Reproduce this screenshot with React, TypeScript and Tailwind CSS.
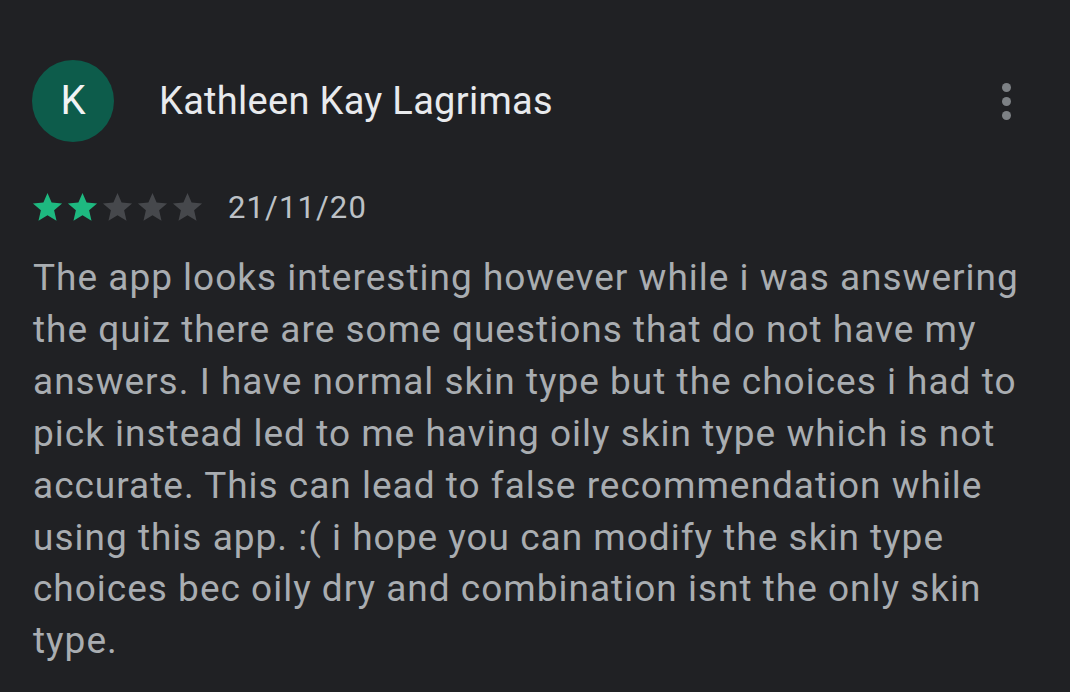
export default function App() {
  const rating = 2;
  return (
    <div className="w-[1070px] h-[692px] overflow-hidden bg-[#202124] font-['Roboto',sans-serif]">
      <div className="pl-[32px] pr-[40px] pt-[60px]">
        {/* Header */}
        <div className="flex items-center">
          <div className="w-[82px] h-[82px] rounded-full bg-[#0d5c4b] flex items-center justify-center text-[40px] leading-none text-[#f1f3f4]">
            K
          </div>
          <div className="ml-[45px] text-[38px] leading-none text-[#e8eaed] tracking-[0.3px]">Kathleen Kay Lagrimas</div>
          <div className="ml-auto flex flex-col gap-[5px] mr-[19px]">
            <span className="w-[9px] h-[9px] rounded-full bg-[#7d8185]" />
            <span className="w-[9px] h-[9px] rounded-full bg-[#7d8185]" />
            <span className="w-[9px] h-[9px] rounded-full bg-[#7d8185]" />
          </div>
        </div>

        {/* Rating */}
        <div className="flex items-center mt-[48px]">
          <div className="flex -ml-[2px]">
            {[0, 1, 2, 3, 4].map((i) => (
              <svg key={i} viewBox="0 0 24 24" className="w-[35px] h-[35px]">
                <path
                  d="M12 17.27L18.18 21l-1.64-7.03L22 9.24l-7.19-.61L12 2 9.19 8.63 2 9.24l5.46 4.73L5.82 21z"
                  fill={i < rating ? "#1eb980" : "#46484c"}
                />
              </svg>
            ))}
          </div>
          <span className="ml-[23px] text-[31px] leading-none tracking-[1.1px] text-[#bdc1c6]">21/11/20</span>
        </div>

        {/* Body */}
        <p className="mt-[27px] ml-[1px] w-[1005px] text-[37px] leading-[51.9px] text-[#a9adb1] tracking-[1px]">
          The app looks interesting however while i was answering the quiz there are some questions that do not have my
          answers. I have normal skin type but the choices i had to pick instead led to me having oily skin type which is
          not accurate. This can lead to false recommendation while using this app. :( i hope you can modify the skin type
          choices bec oily dry and combination isnt the only skin type.
        </p>
      </div>
    </div>
  );
}
